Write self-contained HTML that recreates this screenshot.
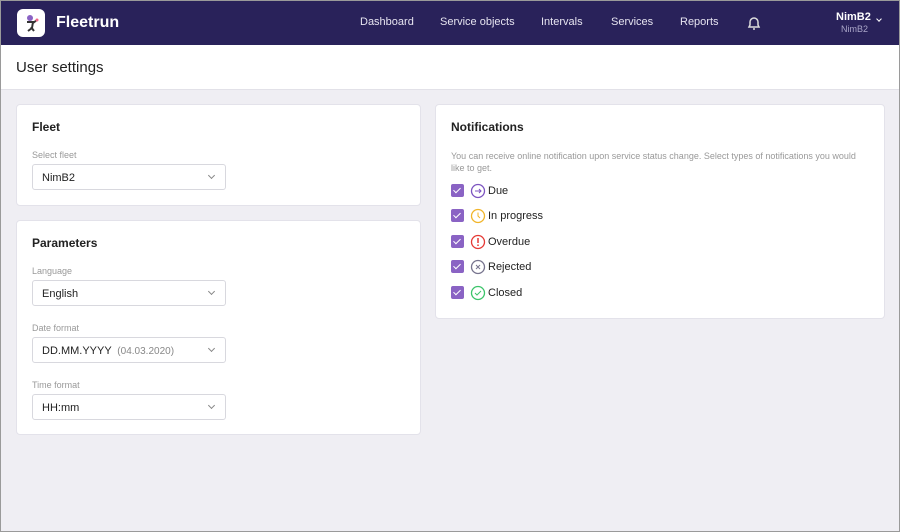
<!DOCTYPE html>
<html><head><style>
*{box-sizing:border-box;margin:0;padding:0}
body{width:900px;height:532px;background:#efeef3;font-family:"Liberation Sans",sans-serif;overflow:hidden;position:relative;border:1px solid #9a9a9a}
.nav{position:absolute;left:0;top:0;width:898px;height:44px;background:#29225a;color:#fff}
.logo{position:absolute;left:16px;top:8px;width:28px;height:28px;background:#fff;border-radius:6px}
.brand{position:absolute;left:55px;top:13px;font-size:16px;font-weight:bold}
.nav a{position:absolute;top:15px;font-size:11px;color:#e6e4f0}
.hdr{position:absolute;left:0;top:44px;width:898px;height:45px;background:#fff;border-bottom:1px solid #e2e1e8}
.hdr span{position:absolute;left:15px;top:14px;font-size:15px;color:#222}
.card{position:absolute;background:#fff;border:1px solid #e3e2ea;border-radius:4px}
.card h3{position:absolute;left:15px;top:15px;font-size:12px;font-weight:bold;color:#222}
.lbl{position:absolute;left:15px;font-size:9px;color:#999}
.sel{position:absolute;left:15px;width:194px;height:26px;border:1px solid #d8d8de;border-radius:3px;font-size:11px;color:#222;padding:7px 9px;white-space:nowrap}
.sel:after{content:"";position:absolute;right:11px;top:8px;width:4px;height:4px;border-right:1px solid #888;border-bottom:1px solid #888;transform:rotate(45deg)}
.row{position:absolute;left:15px;width:200px;height:16px;font-size:11px;color:#222}
.cb{position:absolute;left:0;top:1px;width:13px;height:13px;background:#8a63c4;border-radius:2px}
.row svg{position:absolute}
.row span{position:absolute;left:37px;top:2px;white-space:nowrap}
.cb:after{content:"";position:absolute;left:4px;top:2px;width:3px;height:6px;border-right:1.5px solid #fff;border-bottom:1.5px solid #fff;transform:rotate(45deg)}
</style></head><body>
<div class="nav">
<div class="logo"><svg width="28" height="28"><circle cx="13" cy="9" r="3" fill="#8a63c4"/><path d="M10 13 L16 13 L15 19 L11 22 M14 18 L17 22 M16 14 L20 11" stroke="#333" stroke-width="2" fill="none"/><circle cx="20" cy="11" r="1.5" fill="#e68"/></svg></div>
<div class="brand">Fleetrun</div>
<a style="left:359px">Dashboard</a><a style="left:439px">Service objects</a><a style="left:540px">Intervals</a><a style="left:610px">Services</a><a style="left:679px">Reports</a>
<svg style="position:absolute;left:745px;top:14px" width="16" height="16"><path d="M3 12 L4 10 L4 7 A4 4 0 0 1 12 7 L12 10 L13 12 Z" stroke="#ddd" stroke-width="1.5" fill="none"/><path d="M7 14 L9 14" stroke="#ddd" stroke-width="1.5"/></svg>
<div style="position:absolute;left:835px;top:10px;font-size:11px;font-weight:bold">NimB2</div>
<div style="position:absolute;left:840px;top:23px;font-size:9px;color:#aaa6c8">NimB2</div>
<div style="position:absolute;left:876px;top:16px;width:4px;height:4px;border-right:1.5px solid #fff;border-bottom:1.5px solid #fff;transform:rotate(45deg)"></div>
</div>
<div class="hdr"><span>User settings</span></div>
<div class="card" style="left:15px;top:103px;width:405px;height:102px"><h3>Fleet</h3><div class="lbl" style="top:45px">Select fleet</div><div class="sel" style="top:59px">NimB2</div></div>
<div class="card" style="left:15px;top:219px;width:405px;height:215px"><h3>Parameters</h3>
<div class="lbl" style="top:45px">Language</div><div class="sel" style="top:59px">English</div>
<div class="lbl" style="top:102px">Date format</div><div class="sel" style="top:116px">DD.MM.YYYY <span style="color:#888;font-size:10px">&nbsp;(04.03.2020)</span></div>
<div class="lbl" style="top:159px">Time format</div><div class="sel" style="top:173px">HH:mm</div></div>
<div class="card" style="left:434px;top:103px;width:450px;height:215px"><h3>Notifications</h3>
<div style="position:absolute;left:15px;top:45px;width:420px;font-size:9px;line-height:12px;color:#999">You can receive online notification upon service status change. Select types of notifications you would like to get.</div>
<div class="row" style="top:78px"><div class="cb"></div><svg width="16" height="16" style="left:19px"><circle cx="8" cy="8" r="6.5" stroke="#7c54c0" stroke-width="1.3" fill="none"/><path d="M5 8H11M9 6L11 8L9 10" stroke="#7c54c0" fill="none"/></svg><span>Due</span></div>
<div class="row" style="top:103px"><div class="cb"></div><svg width="16" height="16" style="left:19px"><circle cx="8" cy="8" r="6.5" stroke="#f1b52a" stroke-width="1.3" fill="none"/><path d="M8 4.5V8L10 10" stroke="#f1b52a" fill="none"/></svg><span>In progress</span></div>
<div class="row" style="top:129px"><div class="cb"></div><svg width="16" height="16" style="left:19px"><circle cx="8" cy="8" r="6.5" stroke="#e53935" stroke-width="1.3" fill="none"/><path d="M8 4V9M8 10.5V12" stroke="#e53935" stroke-width="1.5" fill="none"/></svg><span>Overdue</span></div>
<div class="row" style="top:154px"><div class="cb"></div><svg width="16" height="16" style="left:19px"><circle cx="8" cy="8" r="6.5" stroke="#77748e" stroke-width="1.3" fill="none"/><path d="M6 6L10 10M10 6L6 10" stroke="#77748e" fill="none"/></svg><span>Rejected</span></div>
<div class="row" style="top:180px"><div class="cb"></div><svg width="16" height="16" style="left:19px"><circle cx="8" cy="8" r="6.5" stroke="#3cc46a" stroke-width="1.3" fill="none"/><path d="M5 8L7 10L11 6" stroke="#3cc46a" fill="none"/></svg><span>Closed</span></div>
</div>
</body></html>
